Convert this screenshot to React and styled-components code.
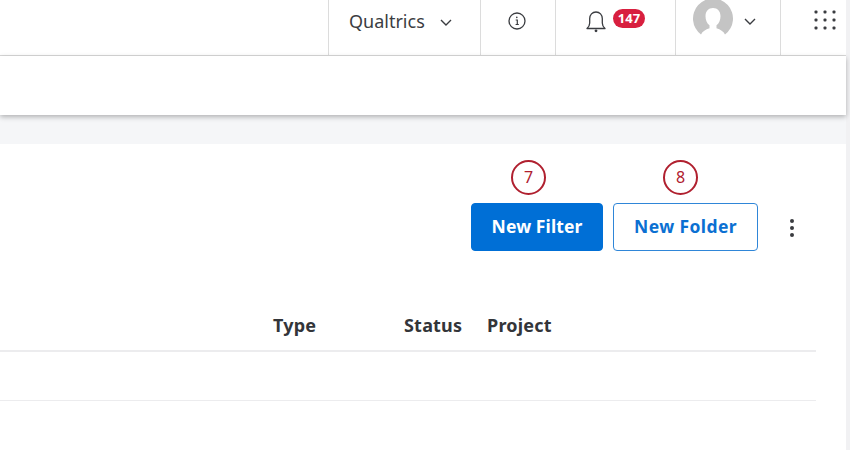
import React from "react";
import styled, { createGlobalStyle } from "styled-components";

const Global = createGlobalStyle`
  html, body { margin: 0; padding: 0; background: #fff; }
  body { font-family: "Noto Sans", "Open Sans", sans-serif; color: #2f3136; overflow: hidden; }
  #root { width: 850px; height: 450px; }
`;
const Page = styled.div`
  width: 850px; height: 450px; overflow: hidden; display: flex; background: #fff;
`;
const Main = styled.div`
  width: 846px; display: flex; flex-direction: column;
`;
const Track = styled.div`
  width: 4px; background: #f1f1f3;
`;
const TopBar = styled.header`
  height: 55px; width: 850px; display: flex; justify-content: flex-end;
  border-bottom: 1px solid #d9d9d9; background: #fff; flex: none;
`;
const NavCell = styled.div`
  width: ${p => p.$w}px; height: 55px; box-sizing: border-box; flex: none;
  border-left: 1px solid #dcdcdc;
  display: flex; align-items: flex-start; padding-left: ${p => p.$pad}px; padding-top: ${p => p.$top}px;
`;
const Org = styled.span`
  font-size: 18px; line-height: 20px; color: #3b3d42;
`;
const Badge = styled.span`
  background: #d81f3f; color: #fff; font-weight: 700; font-size: 13px; line-height: 19px; height: 19px;
  width: 32px; border-radius: 9.5px; text-align: center; margin-left: 7px; margin-top: -1px;
`;
const SubBar = styled.div`
  height: 59px; background: #fff; flex: none; box-shadow: 0 2px 5px rgba(0,0,0,0.28); position: relative;
`;
const Strip = styled.div`
  height: 29px; background: #f5f6f8; flex: none;
`;
const Content = styled.section`
  flex: 1; background: #fff; display: flex; flex-direction: column;
`;
const Toolbar = styled.div`
  display: flex; justify-content: flex-end; align-items: center; margin-top: 59px; height: 48px;
  padding-right: 52px;
`;
const ButtonWrap = styled.div`
  position: relative; margin-left: 10px;
`;
const Button = styled.button`
  height: 48px; width: ${p => p.$w}px; border-radius: 4px; font: 700 17.5px "Noto Sans", sans-serif;
  letter-spacing: ${p => (p.$primary ? "0.1px" : "0.4px")};
  padding: 0 0 2px; box-sizing: border-box; cursor: pointer;
  background: ${p => (p.$primary ? "#006fd6" : "#fff")};
  color: ${p => (p.$primary ? "#fff" : "#0b70d2")};
  border: 1px solid ${p => (p.$primary ? "#006fd6" : "#2f86d8")};
`;
const Callout = styled.span`
  position: absolute; top: -43px; left: ${p => p.$left}px; width: 35px; height: 35px;
  box-sizing: border-box; border: 2px solid #b0202f; border-radius: 50%; color: #b0202f;
  font-size: 16px; line-height: 31px; text-align: center; background: #fff;
`;
const Kebab = styled.div`
  width: 4px; margin: 2px 0 0 32px; display: flex; flex-direction: column; gap: 3px; flex: none;
`;
const Dot = styled.i`
  width: 4px; height: 4px; border-radius: 50%; background: #3a3c40; display: block;
`;
const HeadRow = styled.div`
  display: grid; grid-template-columns: 131px 83px 1fr; margin-top: 62px; height: 37px; padding-left: 273px;
  border-bottom: 2px solid #ececee; width: 543px;
  font-weight: 700; font-size: 18px; line-height: 24px; color: #333539; letter-spacing: 0.2px;
`;
const Row = styled.div`
  height: 48px; width: 816px; border-bottom: 1px solid #ececee; flex: none;
`;

const Chevron = ({ top, left }) => (
  <svg width="12" height="7" viewBox="0 0 12 7" fill="none" stroke="#3a3c40" strokeWidth="1.4"
    style={{ marginTop: top, marginLeft: left, flex: "none" }}>
    <path d="M1 1l5 5 5-5" />
  </svg>
);
const Info = () => (
  <svg width="18" height="18" viewBox="0 0 18 18" fill="none" stroke="#3a3c40" style={{ flex: "none" }}>
    <circle cx="9" cy="9" r="8" strokeWidth="1.3" />
    <path d="M7.7 8h1.6v4.4M7.6 12.5h3.2" strokeWidth="1.2" />
    <circle cx="8.8" cy="5.4" r="0.8" fill="#3a3c40" stroke="none" />
  </svg>
);
const Bell = () => (
  <svg width="20" height="23" viewBox="0 0 20 23" fill="none" stroke="#3a3c40" strokeWidth="1.3" style={{ flex: "none" }}>
    <path d="M1 18.5c1.6-1.4 2.7-3 2.7-5.5V8.6C3.7 4.8 6.3 2 10 2s6.3 2.8 6.3 6.6V13c0 2.5 1.1 4.1 2.7 5.5z" strokeLinejoin="round" />
    <circle cx="10" cy="20.8" r="1.4" fill="#3a3c40" stroke="none" />
  </svg>
);
const Avatar = () => (
  <svg width="40" height="38" viewBox="0 0 40 38" style={{ flex: "none" }}>
    <path d="M8 34.5A20 20 0 1 1 32 34.5c-1.6-3.3-4.5-5-8.5-6.3v-3c2.5-1.8 4-5 4-9 0-5-3-8.2-7.500-8.200s-7.500 3.200-7.500 8.200c0 4 1.500 7.200 4 9v3c-4 1.300-6.900 3-8.500 6.300z" fill="#c4c4c4" />
  </svg>
);
const Grid = () => (
  <svg width="22" height="20" viewBox="0 0 22 20" fill="#3a3c40" style={{ flex: "none" }}>
    {[2, 10, 18].flatMap(y => [2, 11, 20].map(x => <rect key={`${x}-${y}`} x={x - 1.5} y={y - 1.5} width="3" height="3" rx="1" />))}
  </svg>
);

export default function App() {
  return (
    <Page>
      <Global />
      <Main>
        <TopBar>
          <NavCell $w={152} $pad={20} $top={11}>
            <Org>Qualtrics</Org>
            <Chevron top={8} left={15} />
          </NavCell>
          <NavCell $w={75} $pad={27} $top={12}><Info /></NavCell>
          <NavCell $w={120} $pad={30} $top={10}>
            <Bell />
            <Badge>147</Badge>
          </NavCell>
          <NavCell $w={105} $pad={17} $top={0}>
            <Avatar />
            <Chevron top={18} left={11} />
          </NavCell>
          <NavCell $w={70} $pad={33} $top={10}><Grid /></NavCell>
        </TopBar>
        <SubBar />
        <Strip />
        <Content>
          <Toolbar>
            <ButtonWrap>
              <Callout $left={40}>7</Callout>
              <Button $primary $w={132}>New Filter</Button>
            </ButtonWrap>
            <ButtonWrap>
              <Callout $left={50}>8</Callout>
              <Button $w={145}>New Folder</Button>
            </ButtonWrap>
            <Kebab><Dot /><Dot /><Dot /></Kebab>
          </Toolbar>
          <HeadRow>
            <span>Type</span>
            <span>Status</span>
            <span>Project</span>
          </HeadRow>
          <Row />
        </Content>
      </Main>
      <Track />
    </Page>
  );
}
